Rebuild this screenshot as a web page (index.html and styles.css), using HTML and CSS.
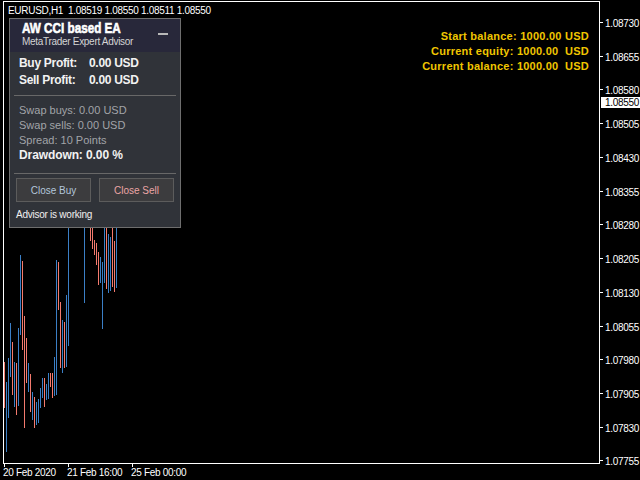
FILE: index.html
```html
<!DOCTYPE html>
<html lang="en">
<head>
    <meta charset="UTF-8">
    <title>EURUSD,H1 - AW CCI based EA</title>
    <link rel="stylesheet" href="styles.css">
</head>
<body>
    <div class="terminal">
        <!-- chart canvas: frame, bars, price and time scales -->
        <svg class="chart" width="640" height="480" viewBox="0 0 640 480">
            <rect class="frame" x="3.5" y="1.5" width="596" height="462"/>

            <path class="bars-up" d="M6.5 382V452M8.5 358V418M10.5 323V377M14.5 362V407M18.5 328V406M20.5 255V335M28.5 363V392M32.5 392V420M36.5 402V425M38.5 399V423M40.5 388V408M42.5 378V398M46.5 384V400M48.5 373V399M54.5 357V396M56.5 260V395M62.5 320V373M66.5 295V367M68.5 210V346M84.5 210V303M100.5 257V283M102.5 262V329M104.5 210V283M108.5 234V293M110.5 237V291M116.5 210V288"/>
            <path class="bars-down" d="M4.5 362V408M12.5 342V395M16.5 363V415M22.5 261V350M24.5 316V428M26.5 338V383M30.5 374V412M34.5 397V428M44.5 378V407M50.5 373V387M52.5 373V398M58.5 262V310M60.5 302V368M64.5 322V368M90.5 210V241M92.5 210V249M94.5 240V255M96.5 243V265M98.5 252V285M106.5 210V289M112.5 210V287M114.5 241V292"/>

            <path class="axis-ticks" d="M600 22.5h3M600 56.5h3M600 89.5h3M600 123.5h3M600 157.5h3M600 191.5h3M600 224.5h3M600 258.5h3M600 292.5h3M600 326.5h3M600 359.5h3M600 393.5h3M600 427.5h3M600 460.5h3M4.5 464v3M68.5 464v3M132.5 464v3"/>

            <text class="axis-label" x="605" y="26.5">1.08730</text>
            <text class="axis-label" x="605" y="60.5">1.08655</text>
            <text class="axis-label" x="605" y="93.5">1.08580</text>
            <text class="axis-label" x="605" y="127.5">1.08505</text>
            <text class="axis-label" x="605" y="161.5">1.08430</text>
            <text class="axis-label" x="605" y="195.5">1.08355</text>
            <text class="axis-label" x="605" y="228.5">1.08280</text>
            <text class="axis-label" x="605" y="262.5">1.08205</text>
            <text class="axis-label" x="605" y="296.5">1.08130</text>
            <text class="axis-label" x="605" y="330.5">1.08055</text>
            <text class="axis-label" x="605" y="363.5">1.07980</text>
            <text class="axis-label" x="605" y="397.5">1.07905</text>
            <text class="axis-label" x="605" y="431.5">1.07830</text>
            <text class="axis-label" x="605" y="464.5">1.07755</text>

            <!-- current bid -->
            <rect class="price-tag" x="601" y="97" width="39" height="11"/>
            <text class="axis-label price-tag-text" x="605" y="106">1.08550</text>

            <text class="axis-label" x="3" y="476">20 Feb 2020</text>
            <text class="axis-label" x="67" y="476">21 Feb 16:00</text>
            <text class="axis-label" x="131" y="476">25 Feb 00:00</text>
        </svg>

        <div class="symbol-line"><span class="symbol-name">EURUSD,H1</span>1.08519 1.08550 1.08511 1.08550</div>

        <div class="account-stats">
            <div class="stat-line">Start balance: 1000.00 USD</div>
            <div class="stat-line">Current equity: 1000.00  USD</div>
            <div class="stat-line">Current balance: 1000.00  USD</div>
        </div>

        <div class="ea-panel">
            <div class="ea-header">
                <span class="ea-title">AW CCI based EA</span>
                <div class="ea-subtitle">MetaTrader Expert Advisor</div>
                <span class="ea-minimize"></span>
            </div>
            <div class="ea-body">
                <div class="profit-grid">
                    <span>Buy Profit:</span><span>0.00 USD</span>
                    <span>Sell Profit:</span><span>0.00 USD</span>
                </div>
                <div class="divider"></div>
                <div class="stats-list">
                    <div>Swap buys: 0.00 USD</div>
                    <div>Swap sells: 0.00 USD</div>
                    <div>Spread: 10 Points</div>
                    <div class="drawdown">Drawdown: 0.00 %</div>
                </div>
                <div class="divider lower"></div>
                <div class="ea-actions">
                    <button class="ea-button buy">Close Buy</button>
                    <button class="ea-button sell">Close Sell</button>
                </div>
                <div class="ea-status">Advisor is working</div>
            </div>
        </div>
    </div>
</body>
</html>
```

FILE: styles.css
```css
* {
    margin: 0;
    padding: 0;
    box-sizing: border-box;
}

body {
    background-color: #000;
    font-family: 'Liberation Sans', Arial, sans-serif;
    overflow: hidden;
}

.terminal {
    position: relative;
    width: 640px;
    height: 480px;
}

.chart {
    display: block;
}

/* chart drawing */
.frame {
    fill: none;
    stroke: #fff;
}

.bars-up {
    fill: none;
    stroke: #3b7fc6;
}

.bars-down {
    fill: none;
    stroke: #f47a6e;
}

.axis-ticks {
    stroke: #fff;
}

.axis-label {
    fill: #fff;
    font-family: 'Liberation Sans', Arial, sans-serif;
    font-size: 10px;
    letter-spacing: -0.3px;
}

.price-tag {
    fill: #fff;
}

.price-tag-text {
    fill: #000;
}

/* texts drawn over the chart */
.symbol-line {
    position: absolute;
    left: 8px;
    top: 5px;
    display: flex;
    color: #fff;
    font-size: 10px;
    line-height: 12px;
    letter-spacing: -0.3px;
    white-space: pre;
}

.symbol-name {
    width: 60px;
}

.account-stats {
    position: absolute;
    top: 29px;
    right: 51px;
    text-align: right;
    color: #f0c600;
    font-size: 11px;
    font-weight: bold;
    line-height: 15px;
    letter-spacing: 0.25px;
}

.stat-line {
    white-space: pre;
}

/* expert advisor panel */
.ea-panel {
    position: absolute;
    left: 9px;
    top: 18px;
    width: 172px;
    height: 210px;
    background-color: #303339;
    border: 1px solid #6e6e6e;
}

.ea-header {
    position: relative;
    height: 33px;
    padding: 1px 0 0 12px;
    background-color: #28283a;
}

.ea-title {
    display: block;
    color: #fff;
    font-size: 15px;
    font-weight: bold;
    line-height: 16px;
    transform: scaleX(0.78);
    transform-origin: left;
    -webkit-text-stroke: 0.6px #fff;
}

.ea-subtitle {
    color: #d4d4d4;
    font-size: 10px;
    line-height: 12px;
    letter-spacing: -0.3px;
}

.ea-minimize {
    position: absolute;
    right: 12px;
    top: 14px;
    width: 10px;
    height: 2px;
    background-color: #b8b8b8;
}

.ea-body {
    padding: 3px 4px 0 4px;
}

.profit-grid {
    display: grid;
    grid-template-columns: 70px auto;
    padding-left: 5px;
    color: #f2f2f2;
    font-size: 12px;
    font-weight: bold;
    line-height: 17px;
    letter-spacing: -0.3px;
}

.divider {
    height: 1px;
    margin-top: 6px;
    background-color: #686868;
}

.divider.lower {
    margin-top: 10px;
}

.stats-list {
    margin-top: 7px;
    padding-left: 5px;
    color: #a2a4a8;
    font-size: 11px;
    line-height: 15px;
}

.stats-list .drawdown {
    color: #f2f2f2;
    font-size: 12px;
    font-weight: bold;
    letter-spacing: -0.1px;
}

.ea-actions {
    display: flex;
    gap: 8px;
    margin-top: 4px;
    padding-left: 2px;
}

.ea-button {
    width: 75px;
    height: 24px;
    background-color: #3c3c3e;
    border: 1px solid #5c5c5c;
    font-family: 'Liberation Sans', Arial, sans-serif;
    font-size: 10px;
}

.ea-button.buy {
    color: #b3c6da;
}

.ea-button.sell {
    color: #eba5a5;
}

.ea-status {
    margin-top: 6px;
    padding-left: 2px;
    color: #f0f0f0;
    font-size: 10px;
    line-height: 13px;
    letter-spacing: -0.25px;
}
```
